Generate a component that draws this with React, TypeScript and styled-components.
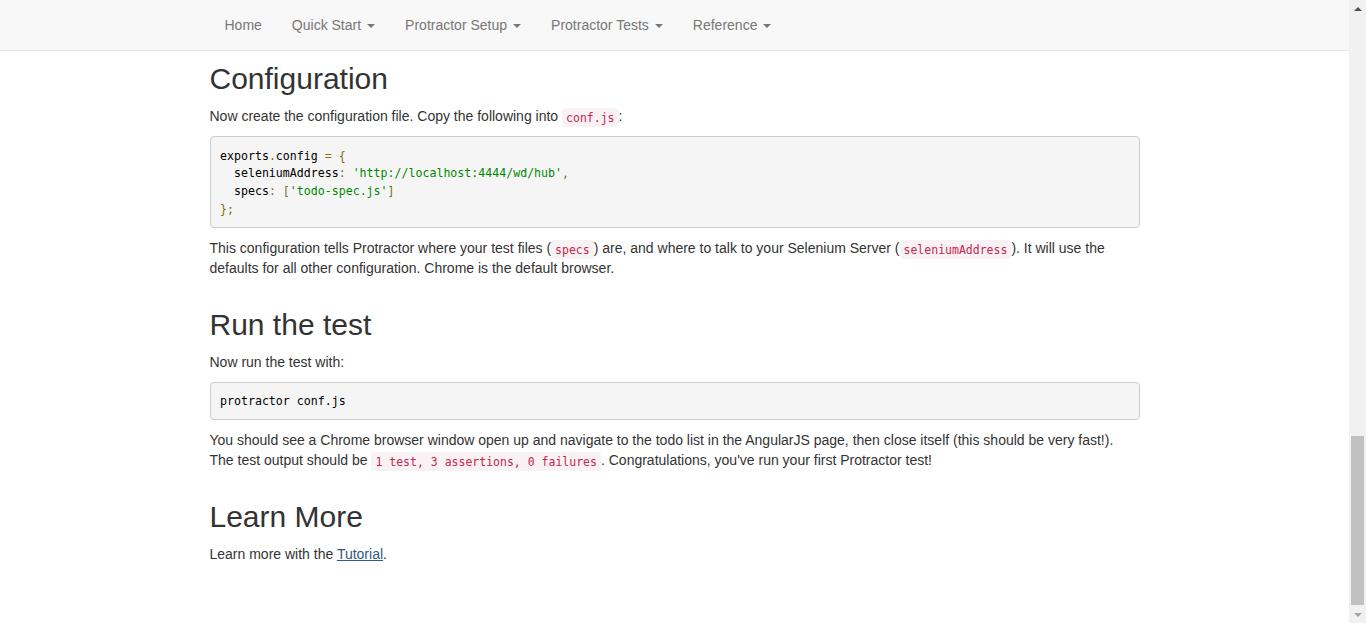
import React from "react";
import styled, { createGlobalStyle } from "styled-components";

const GlobalStyle = createGlobalStyle`
  html, body {
    margin: 0;
    padding: 0;
    overflow: hidden;
    background: #fff;
  }
  body {
    font-family: "Liberation Sans", Arial, Helvetica, sans-serif;
    font-size: 14px;
    line-height: 1.42857143;
    color: #333;
  }
  * { box-sizing: border-box; }
`;

const Viewport = styled.div`
  display: flex;
  height: 100vh;
  width: 100vw;
`;

const Page = styled.div`
  flex: 1;
  min-width: 0;
  overflow: hidden;
`;

const Navbar = styled.nav`
  background: #f8f8f8;
  border-bottom: 1px solid #e7e7e7;
`;

const Container = styled.div`
  width: 960px;
  margin: 0 auto;
  padding: 0 15px;
`;

const NavList = styled.ul`
  display: flex;
  list-style: none;
  margin: 0;
  padding: 0;
`;

const NavLink = styled.a`
  display: flex;
  align-items: center;
  padding: 15px;
  line-height: 20px;
  color: #777;
  text-decoration: none;
  cursor: pointer;
`;

const Caret = styled.span`
  display: inline-block;
  width: 0;
  height: 0;
  margin-left: 6px;
  margin-top: 1px;
  border-top: 4px solid #777;
  border-left: 4px solid transparent;
  border-right: 4px solid transparent;
`;

const Content = styled(Container)`
  padding-top: 11px;
`;

const Section = styled.section`
  display: flow-root;
`;

const H2 = styled.h2<{ $first?: boolean }>`
  font-size: 30px;
  font-weight: 500;
  line-height: 1.1;
  color: #333;
  margin: ${(p) => (p.$first ? "0" : "19.5px")} 0 11px;
`;

const P = styled.p`
  margin: 0 0 10px;
`;

const Code = styled.code`
  font-family: "DejaVu Sans Mono", "Liberation Mono", monospace;
  font-size: 11.5px;
  padding: 2.5px 4px;
  color: #c7254e;
  background: #f9f2f4;
  border-radius: 4px;
`;

const Pre = styled.pre`
  display: block;
  margin: 0 0 10px;
  padding: 10.5px 9.5px 8.5px;
  font-family: "DejaVu Sans Mono", "Liberation Mono", monospace;
  font-size: 11.6px;
  line-height: 17.75px;
  color: #000;
  background: #f5f5f5;
  border: 1px solid #ccc;
  border-radius: 4px;
  white-space: pre;
  overflow: hidden;
`;

const Pun = styled.span`
  color: #806c14;
`;

const Str = styled.span`
  color: #080;
`;

const Link = styled.a`
  color: #2f5a84;
  text-decoration: underline;
`;

const ScrollTrack = styled.div`
  width: 17px;
  flex-shrink: 0;
  background: #f1f1f1;
  display: flex;
  flex-direction: column;
`;

const ArrowBox = styled.div`
  height: 17px;
  display: flex;
  align-items: center;
  justify-content: center;
`;

const ArrowUp = styled.span`
  width: 0;
  height: 0;
  border-left: 4px solid transparent;
  border-right: 4px solid transparent;
  border-bottom: 4px solid #505050;
`;

const ArrowDown = styled.span`
  width: 0;
  height: 0;
  border-left: 4px solid transparent;
  border-right: 4px solid transparent;
  border-top: 4px solid #a3a3a3;
`;

const Trough = styled.div`
  flex: 1;
  display: flex;
  flex-direction: column;
  justify-content: flex-end;
  padding: 0 2px 1px;
`;

const Thumb = styled.div`
  height: 169px;
  background: #c1c1c1;
`;

const navItems: { label: string; caret: boolean }[] = [
  { label: "Home", caret: false },
  { label: "Quick Start", caret: true },
  { label: "Protractor Setup", caret: true },
  { label: "Protractor Tests", caret: true },
  { label: "Reference", caret: true },
];

export default function App() {
  return (
    <>
      <GlobalStyle />
      <Viewport>
        <Page>
          <Navbar>
            <Container>
              <NavList>
                {navItems.map((n) => (
                  <li key={n.label}>
                    <NavLink>
                      {n.label}
                      {n.caret && <Caret />}
                    </NavLink>
                  </li>
                ))}
              </NavList>
            </Container>
          </Navbar>
          <Content>
            <Section>
              <H2 $first>Configuration</H2>
              <P>
                Now create the configuration file. Copy the following into <Code>conf.js</Code>:
              </P>
              <Pre>
                {"exports"}
                <Pun>.</Pun>
                {"config "}
                <Pun>=</Pun> <Pun>{"{"}</Pun>
                {"\n  seleniumAddress"}
                <Pun>:</Pun> <Str>'http://localhost:4444/wd/hub'</Str>
                <Pun>,</Pun>
                {"\n  specs"}
                <Pun>:</Pun> <Pun>[</Pun>
                <Str>'todo-spec.js'</Str>
                <Pun>]</Pun>
                {"\n"}
                <Pun>{"};"}</Pun>
              </Pre>
              <P>
                This configuration tells Protractor where your test files (<Code>specs</Code>) are, and where
                to talk to your Selenium Server (<Code>seleniumAddress</Code>). It will use the defaults for all
                other configuration. Chrome is the default browser.
              </P>
            </Section>
            <Section>
              <H2>Run the test</H2>
              <P>Now run the test with:</P>
              <Pre>protractor conf.js</Pre>
              <P>
                You should see a Chrome browser window open up and navigate to the todo list in the AngularJS
                page, then close itself (this should be very fast!). The test output should be{" "}
                <Code>1 test, 3 assertions, 0 failures</Code>. Congratulations, you've run your first
                Protractor test!
              </P>
            </Section>
            <Section>
              <H2>Learn More</H2>
              <P>
                Learn more with the <Link>Tutorial</Link>.
              </P>
            </Section>
          </Content>
        </Page>
        <ScrollTrack>
          <ArrowBox>
            <ArrowUp />
          </ArrowBox>
          <Trough>
            <Thumb />
          </Trough>
          <ArrowBox>
            <ArrowDown />
          </ArrowBox>
        </ScrollTrack>
      </Viewport>
    </>
  );
}
